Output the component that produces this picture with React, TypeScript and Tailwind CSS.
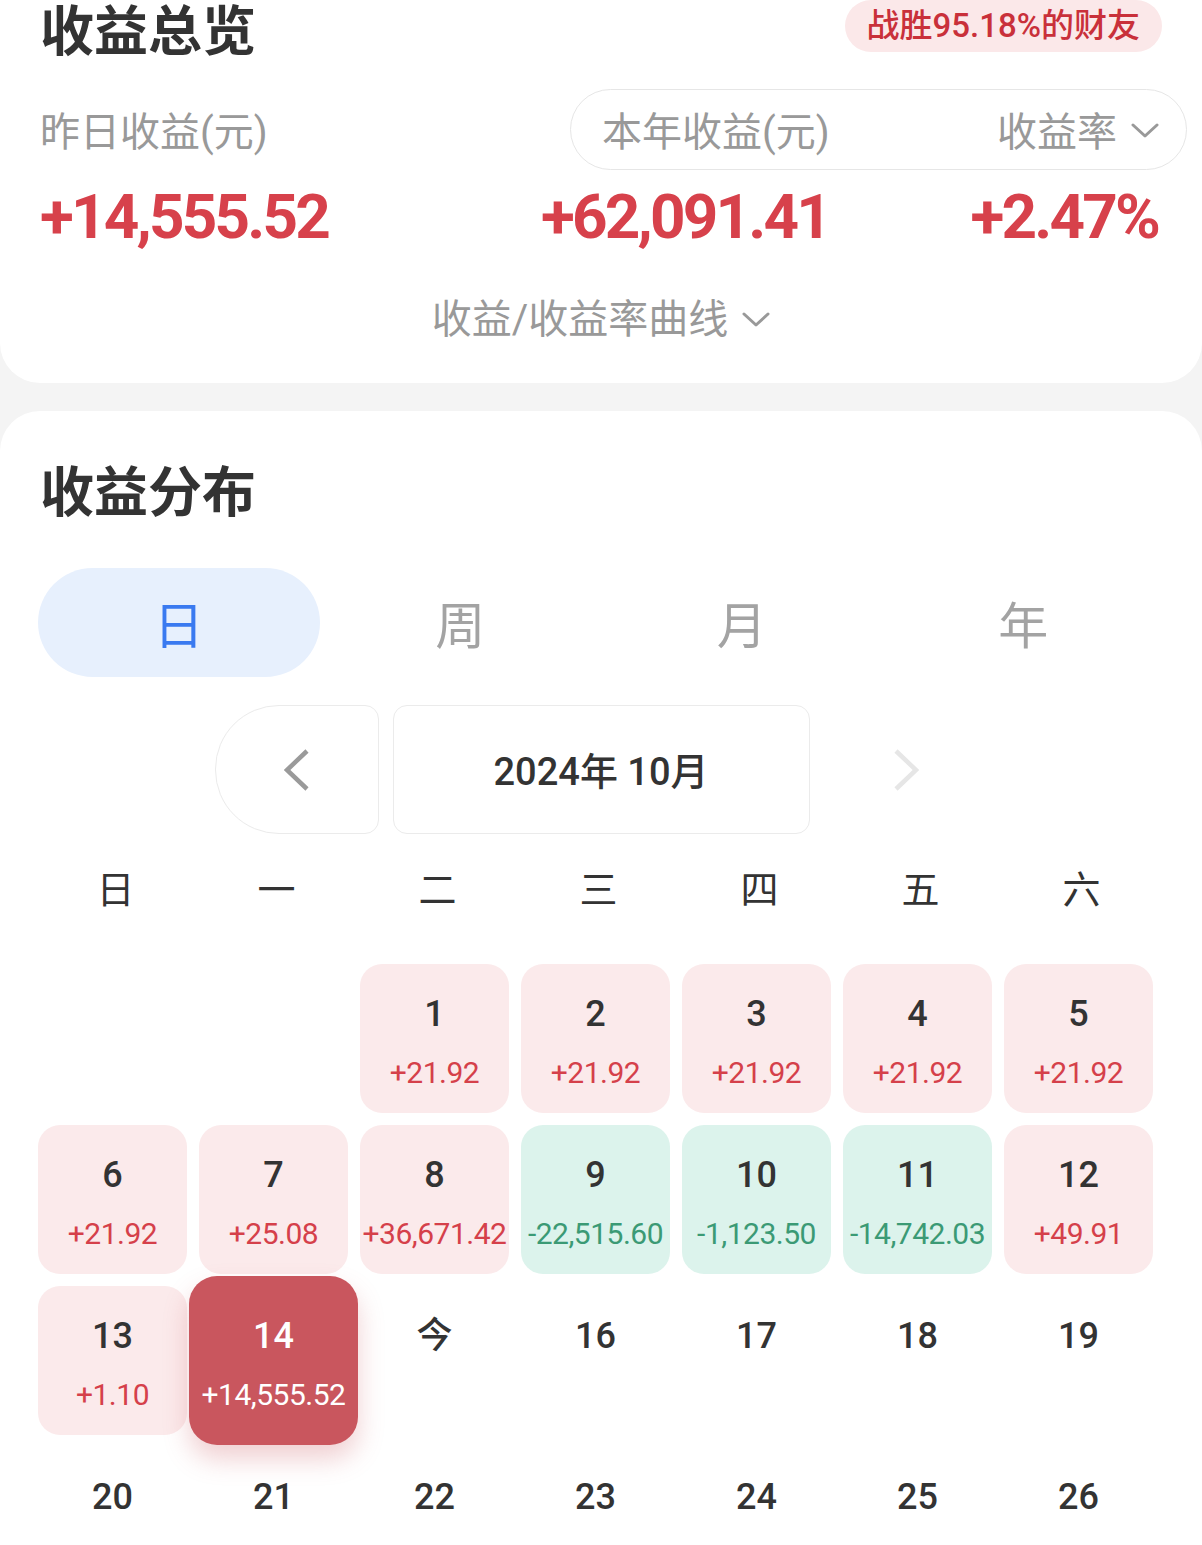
import React from "react";

type Day = {
  day: number;
  label?: string;
  value?: string;
  tone?: "up" | "down";
  active?: boolean;
};

const days: (Day | null)[] = [
  null,
  null,
  { day: 1, value: "+21.92", tone: "up" },
  { day: 2, value: "+21.92", tone: "up" },
  { day: 3, value: "+21.92", tone: "up" },
  { day: 4, value: "+21.92", tone: "up" },
  { day: 5, value: "+21.92", tone: "up" },
  { day: 6, value: "+21.92", tone: "up" },
  { day: 7, value: "+25.08", tone: "up" },
  { day: 8, value: "+36,671.42", tone: "up" },
  { day: 9, value: "-22,515.60", tone: "down" },
  { day: 10, value: "-1,123.50", tone: "down" },
  { day: 11, value: "-14,742.03", tone: "down" },
  { day: 12, value: "+49.91", tone: "up" },
  { day: 13, value: "+1.10", tone: "up" },
  { day: 14, value: "+14,555.52", tone: "up", active: true },
  { day: 15, label: "今" },
  ...Array.from({ length: 16 }, (_, i) => ({ day: 16 + i })),
];

const weekDays = ["日", "一", "二", "三", "四", "五", "六"];
const tabs = ["日", "周", "月", "年"];

function ChevronDown({ className = "" }: { className?: string }) {
  return (
    <svg width="28" height="16" viewBox="0 0 28 16" className={className}>
      <polyline
        points="2,2 14,13 26,2"
        fill="none"
        stroke="currentColor"
        strokeWidth="3"
        strokeLinecap="round"
        strokeLinejoin="round"
      />
    </svg>
  );
}

function ChevronSide({ dir, color }: { dir: "left" | "right"; color: string }) {
  const points = dir === "left" ? "23,2 3,21 23,40" : "3,2 23,21 3,40";
  return (
    <svg width="26" height="42" viewBox="0 0 26 42">
      <polyline
        points={points}
        fill="none"
        stroke={color}
        strokeWidth="4.5"
        strokeLinejoin="miter"
      />
    </svg>
  );
}

function DayCell({ d }: { d: Day | null }) {
  if (!d) return <div className="h-[149px]" />;

  if (!d.value) {
    return (
      <div className="h-[149px] flex flex-col items-center pt-[32px]">
        <span className="text-[36px] leading-none font-medium text-[#333]">
          {d.label ?? d.day}
        </span>
      </div>
    );
  }

  if (d.active) {
    return (
      <div className="relative z-10 h-[149px] flex flex-col items-center pt-[32px]">
        <div className="absolute -inset-[10px] rounded-[28px] bg-[#c9565e] shadow-[0_14px_26px_rgba(201,86,94,0.28)]" />
        <span className="relative text-[36px] leading-none font-medium text-white">
          {d.day}
        </span>
        <span className="relative mt-[26px] text-[30px] leading-none tracking-[-0.5px] text-white whitespace-nowrap">
          {d.value}
        </span>
      </div>
    );
  }

  const up = d.tone === "up";
  return (
    <div
      className={`h-[149px] rounded-[22px] flex flex-col items-center pt-[32px] ${
        up ? "bg-[#fbeaeb]" : "bg-[#dcf3ec]"
      }`}
    >
      <span className="text-[36px] leading-none font-medium text-[#333]">
        {d.day}
      </span>
      <span
        className={`mt-[26px] text-[30px] leading-none tracking-[-0.5px] whitespace-nowrap ${
          up ? "text-[#d5404a]" : "text-[#3b9a75]"
        }`}
      >
        {d.value}
      </span>
    </div>
  );
}

export default function App() {
  return (
    <div className="min-h-screen bg-[#f4f4f4] font-[Roboto,'Noto_Sans_CJK_SC',sans-serif]">
      {/* overview card */}
      <div className="bg-white rounded-b-[40px] px-[40px] pb-[43px]">
        <div className="flex items-start justify-between h-[52px]">
          <h1 className="pt-[6px] text-[54px] leading-none font-bold text-[#333]">
            收益总览
          </h1>
          <span className="h-[52px] rounded-full bg-[#fbe8e9] px-[22px] flex items-center text-[33px] font-medium text-[#c9303a]">
            战胜95.18%的财友
          </span>
        </div>

        <div className="mt-[37px] flex">
          <div className="w-[501px]">
            <div className="h-[81px] pt-[6px] flex items-center text-[40px] text-[#999]">
              昨日收益(元)
            </div>
            <div className="mt-[16px] text-[62px] leading-none font-bold tracking-[-2.8px] text-[#d7414b]">
              +14,555.52
            </div>
          </div>
          <div className="flex-1">
            <div className="ml-[29px] -mr-[25px] h-[81px] pt-[6px] rounded-full border border-[#e6e6e6] flex items-center justify-between pl-[31px] pr-[27px] text-[40px] text-[#999]">
              <span>本年收益(元)</span>
              <span className="flex items-center gap-[14px]">
                收益率
                <ChevronDown className="text-[#999] -mt-[4px]" />
              </span>
            </div>
            <div className="mt-[16px] pr-[4px] flex justify-between text-[62px] leading-none font-bold tracking-[-2.8px] text-[#d7414b]">
              <span>+62,091.41</span>
              <span>+2.47%</span>
            </div>
          </div>
        </div>

        <div className="mt-[52px] flex justify-center items-center gap-[14px] text-[40px] leading-none text-[#999]">
          <span>收益/收益率曲线</span>
          <ChevronDown />
        </div>
      </div>

      {/* distribution card */}
      <div className="mt-[28px] bg-white rounded-t-[40px] px-[38px] pt-[56px] pb-[40px]">
        <h2 className="text-[54px] leading-none font-bold text-[#333] ml-[2px]">
          收益分布
        </h2>

        <div className="mt-[47px] grid grid-cols-4 h-[109px]">
          {tabs.map((t, i) => (
            <div
              key={t}
              className={`flex items-center justify-center pt-[10px] rounded-full text-[50px] ${
                i === 0 ? "bg-[#e7f0fd] text-[#3a7af0]" : "text-[#a3a3a3]"
              }`}
            >
              {t}
            </div>
          ))}
        </div>

        <div className="mt-[28px] flex justify-center gap-[14px] h-[129px]">
          <button className="w-[164px] rounded-l-[64px] rounded-r-[14px] border border-[#ebebeb] flex items-center justify-center">
            <ChevronSide dir="left" color="#9a9a9a" />
          </button>
          <div className="w-[417px] pt-[6px] rounded-[14px] border border-[#ebebeb] flex items-center justify-center text-[38px] font-medium text-[#333]">
            2024年 10月
          </div>
          <button className="w-[164px] flex items-center justify-center">
            <ChevronSide dir="right" color="#e6e6e6" />
          </button>
        </div>

        <div className="mr-[11px]">
          <div className="mt-[37px] grid grid-cols-7 gap-x-[12px]">
            {weekDays.map((w) => (
              <div key={w} className="text-center text-[38px] leading-none text-[#333] pl-[6px]">
                {w}
              </div>
            ))}
          </div>

          <div className="mt-[55px] grid grid-cols-7 gap-[12px]">
            {days.map((d, i) => (
              <DayCell key={i} d={d} />
            ))}
          </div>
        </div>
      </div>
    </div>
  );
}
